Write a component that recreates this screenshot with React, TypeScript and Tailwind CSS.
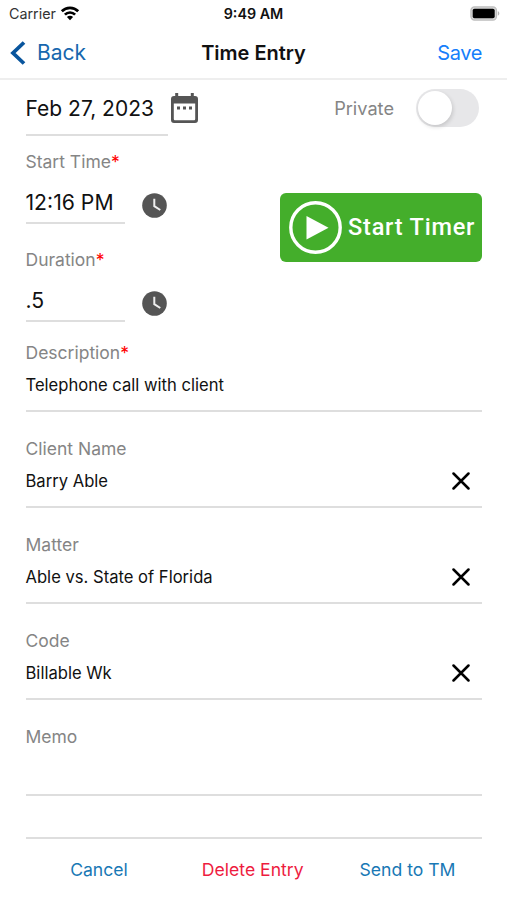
import { clsx } from "clsx"

function WifiIcon() {
    return (
        <svg width="20" height="15" viewBox="0 0 20 15" className="ml-[4px]">
            <g fill="none" stroke="#000" strokeWidth="2.7">
                <path d="M1.8 5.3a11.6 11.6 0 0 1 16.4 0" />
                <path d="M4.9 8.6a7.2 7.2 0 0 1 10.2 0" />
            </g>
            <path d="M10 14.2 6.9 11.1a4.4 4.4 0 0 1 6.2 0z" />
        </svg>
    )
}

function BatteryIcon() {
    return (
        <svg width="30" height="16" viewBox="0 0 30 16">
            <rect x="0.9" y="0.9" width="25.6" height="13.2" rx="3.6" fill="#d6d6d6" stroke="#bdbdbd" strokeWidth="1.2" />
            <rect x="2.7" y="2.7" width="22" height="9.6" rx="1.8" />
            <path d="M27.8 5.3c2 .6 2 3.8 0 4.4z" fill="#b5b5b5" />
        </svg>
    )
}

function CalendarIcon() {
    return (
        <svg width="27" height="30" viewBox="0 0 27 30" fill="#555" className="ml-[3px]">
            <path
                fillRule="evenodd"
                d="M4.2 0h3v3h12.6V0h3v3H24a3 3 0 0 1 3 3v21a3 3 0 0 1-3 3H3a3 3 0 0 1-3-3V6a3 3 0 0 1 3-3h1.2zM2.8 10.5v15.2c0 1 .5 1.5 1.5 1.5h18.4c1 0 1.5-.5 1.5-1.5V10.5z"
            />
            <path d="M6 13.5h3v3H6zM12 13.5h3v3h-3zM18 13.5h3v3h-3z" />
        </svg>
    )
}

function ClockIcon() {
    return (
        <svg width="25" height="25" viewBox="0 0 25 25">
            <circle cx="12.5" cy="12.5" r="12.3" fill="#555" />
            <path d="M12.3 5.8v7.4l6 3.8" fill="none" stroke="#eee" strokeWidth="2" />
        </svg>
    )
}

function ClearIcon() {
    return (
        <svg width="18" height="18" viewBox="0 0 18 18" className="mr-3">
            <path d="M1.5 1.5l15 15M16.5 1.5l-15 15" stroke="#000" strokeWidth="2.5" strokeLinecap="round" />
        </svg>
    )
}

function Label({ text, required }: { text: string; required?: boolean }) {
    return (
        <label className="block h-6 text-[17.5px] leading-6 text-[#858585]">
            {text}
            {required && <span className="text-[#f00]">*</span>}
        </label>
    )
}

type FieldProps = {
    label: string
    value?: string
    required?: boolean
    clearable?: boolean
}

function Field({ label, value, required, clearable }: FieldProps) {
    return (
        <div
            className={clsx(
                "flex flex-col border-b-2 border-[#dedede]",
                required ? "h-[90px] pt-[19px]" : "h-24 pt-[25px]"
            )}
        >
            <Label text={label} required={required} />
            <div className="mt-2 flex h-6 items-center justify-between">
                <span className="text-[16.6px] leading-6 text-[#111]">{value}</span>
                {clearable && <ClearIcon />}
            </div>
        </div>
    )
}

function TimeField({ label, value }: { label: string; value: string }) {
    return (
        <div>
            <Label text={label} required />
            <div className="flex">
                <div className="h-[50px] w-[99px] border-b-2 border-[#dedede] pt-[14px] text-[21.2px] leading-7 whitespace-nowrap">
                    {value}
                </div>
                <button type="button" className="mt-[19px] ml-[17.5px] h-[25px]">
                    <ClockIcon />
                </button>
            </div>
        </div>
    )
}

export default function App() {
    const fields: FieldProps[] = [
        { label: "Description", value: "Telephone call with client", required: true },
        { label: "Client Name", value: "Barry Able", clearable: true },
        { label: "Matter", value: "Able vs. State of Florida", clearable: true },
        { label: "Code", value: "Billable Wk", clearable: true },
        { label: "Memo" },
    ]

    return (
        <div className="h-[900px] w-[507px] overflow-hidden bg-white font-['Inter',sans-serif] text-[#111]">
            <div className="grid h-[27px] grid-cols-[1fr_auto_1fr] items-center pr-[7px] pl-[7px] text-[14.3px]">
                <div className="flex items-center pl-[2px] text-[#333]">
                    Carrier
                    <WifiIcon />
                </div>
                <span className="text-center font-semibold">9:49 AM</span>
                <div className="flex justify-end">
                    <BatteryIcon />
                </div>
            </div>

            <header className="grid h-[53px] grid-cols-[1fr_auto_1fr] items-center border-b-2 border-[#eee] px-[10px]">
                <button type="button" className="flex items-center text-[21px] text-[#1767ae]">
                    <svg width="17" height="24" viewBox="0 0 17 24" className="mr-[10px]">
                        <path d="M14 1.5 3 12l11 10.5" fill="none" stroke="#09559d" strokeWidth="3.8" />
                    </svg>
                    Back
                </button>
                <h1 className="text-center text-[20px] font-semibold whitespace-nowrap">Time Entry</h1>
                <button type="button" className="pr-[15px] text-right text-[20px] tracking-[-0.4px] text-[#157efb]">
                    Save
                </button>
            </header>

            <main className="pr-[25px] pl-[25.5px]">
                <div className="flex h-14 items-start">
                    <div className="h-14 w-[142.5px] border-b-2 border-[#dedede] pt-[15px] text-[21px] leading-7 whitespace-nowrap">
                        Feb 27, 2023
                    </div>
                    <button type="button" className="mt-[13px]">
                        <CalendarIcon />
                    </button>
                    <span className="mt-4 ml-auto text-[18.2px] leading-6 text-[#858585]">Private</span>
                    <button
                        type="button"
                        role="switch"
                        aria-checked="false"
                        className="mt-[9px] mr-[3px] ml-[22px] flex h-[38px] w-[63px] items-center rounded-full bg-[#e7e7e9] p-[2px]"
                    >
                        <span className="size-[34px] rounded-full bg-white shadow-[1px_2px_4px_rgba(0,0,0,0.15)]" />
                    </button>
                </div>

                <div className="flex justify-between">
                    <div className="flex flex-col gap-6 pt-[14px]">
                        <TimeField label="Start Time" value="12:16 PM" />
                        <TimeField label="Duration" value=".5" />
                    </div>
                    <button
                        type="button"
                        className="mt-[57px] flex h-[69px] w-[202px] items-center rounded-[6px] bg-[#44ae2b] pl-[9px] text-white"
                    >
                        <svg width="53" height="53" viewBox="0 0 53 53">
                            <circle cx="26.5" cy="26.5" r="24.7" fill="none" stroke="#fff" strokeWidth="3.4" />
                            <path d="M17.5 15v23.5l22-11.8z" fill="#fff" />
                        </svg>
                        <span className="ml-[6px] font-[Roboto,sans-serif] text-[23.5px] font-medium tracking-[0.8px] whitespace-nowrap">
                            Start Timer
                        </span>
                    </button>
                </div>

                {fields.map((field) => (
                    <Field key={field.label} {...field} />
                ))}

                <footer className="mt-[41px] grid grid-cols-[147px_1fr_149px] border-t-2 border-[#dedede] pt-[17px] text-center text-[17.6px] leading-7 whitespace-nowrap">
                    <button type="button" className="text-[#1878b5]">Cancel</button>
                    <button type="button" className="text-[#ee1c3f]">Delete Entry</button>
                    <button type="button" className="text-[#1878b5]">Send to TM</button>
                </footer>
            </main>
        </div>
    )
}
